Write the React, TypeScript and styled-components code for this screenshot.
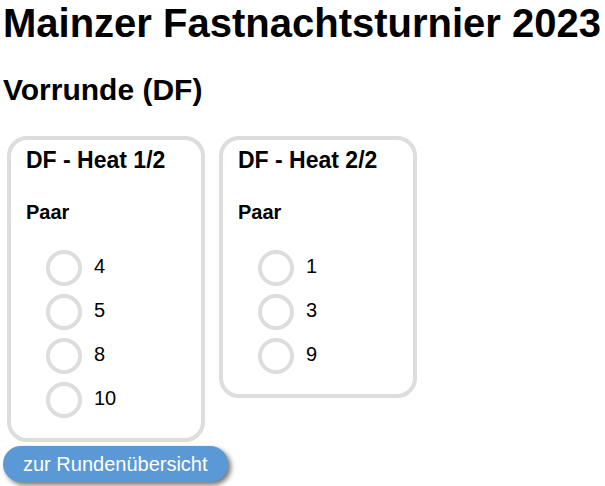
import React from "react";
import styled, { createGlobalStyle } from "styled-components";

const GlobalStyle = createGlobalStyle`
  * {
    box-sizing: border-box;
  }
  body {
    margin: 0;
    background: #ffffff;
    color: #000000;
    font-family: "Liberation Sans", Arial, sans-serif;
    font-size: 20px;
    line-height: 24px;
  }
`;

const Page = styled.main`
  min-height: 100vh;
  padding: 0 3px 4px;
`;

const Title = styled.h1`
  margin: 0;
  font-size: 40px;
  line-height: 46px;
  white-space: nowrap;
`;

const RoundName = styled.h2`
  margin: 26px 0 28px;
  font-size: 30px;
  line-height: 36px;
`;

const Heats = styled.div`
  display: flex;
  flex-wrap: wrap;
  align-items: flex-start;
  gap: 14px;
  padding: 0 4px 4px;
`;

const HeatCard = styled.section`
  flex: 0 0 198px;
  padding: 6px 15px 20px;
  border: 4px solid #dddddd;
  border-radius: 20px;
`;

const HeatTitle = styled.h3`
  margin: 0;
  font-size: 23px;
  line-height: 28px;
`;

const ColumnTitle = styled.h4`
  margin: 26px 0;
  font-size: 20px;
  line-height: 24px;
`;

const Couples = styled.ul`
  display: grid;
  gap: 8px;
  margin: 0;
  padding: 0 0 0 20px;
  list-style: none;
`;

const Couple = styled.label`
  display: flex;
  align-items: flex-start;
  gap: 12px;
  line-height: 32px;
  cursor: pointer;
`;

const Tick = styled.input`
  appearance: none;
  flex: none;
  width: 36px;
  height: 36px;
  margin: 0;
  border: 4px solid #dddddd;
  border-radius: 50%;
  background: #ffffff;
  cursor: pointer;

  &:checked {
    background: #5b9bd5;
  }
`;

const OverviewButton = styled.button`
  display: block;
  padding: 6px 20px;
  border: 0;
  border-radius: 18px;
  background: #5b99d6;
  box-shadow: 3px 3px 5px #777777;
  color: #ffffff;
  font: inherit;
  cursor: pointer;
`;

const heats = [
  { name: "DF - Heat 1/2", couples: [4, 5, 8, 10] },
  { name: "DF - Heat 2/2", couples: [1, 3, 9] },
];

export default function App() {
  return (
    <>
      <GlobalStyle />
      <Page>
        <Title>Mainzer Fastnachtsturnier 2023</Title>
        <RoundName>Vorrunde (DF)</RoundName>
        <Heats>
          {heats.map((heat) => (
            <HeatCard key={heat.name}>
              <HeatTitle>{heat.name}</HeatTitle>
              <ColumnTitle>Paar</ColumnTitle>
              <Couples>
                {heat.couples.map((couple) => (
                  <li key={couple}>
                    <Couple htmlFor={`couple-${couple}`}>
                      <Tick type="checkbox" id={`couple-${couple}`} />
                      {couple}
                    </Couple>
                  </li>
                ))}
              </Couples>
            </HeatCard>
          ))}
        </Heats>
        <OverviewButton type="button">zur Rundenübersicht</OverviewButton>
      </Page>
    </>
  );
}
